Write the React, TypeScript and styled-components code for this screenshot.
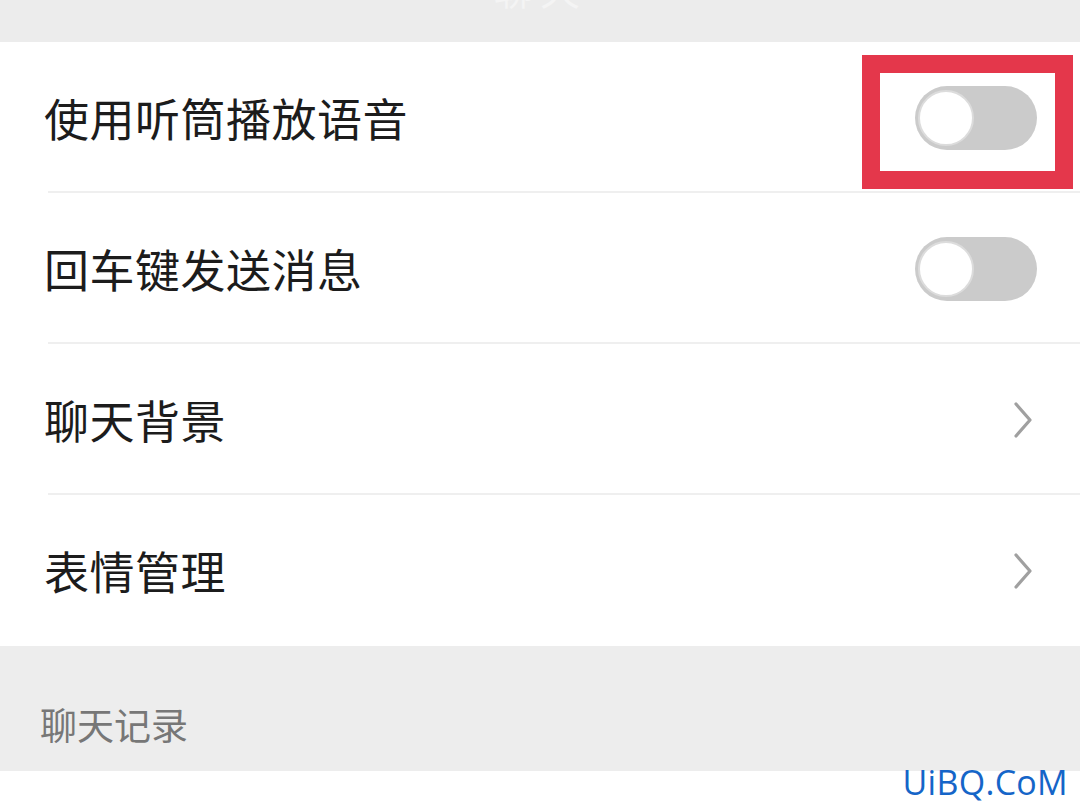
import styled, { createGlobalStyle } from 'styled-components'

const GlobalStyle = createGlobalStyle`
  html, body {
    margin: 0;
    padding: 0;
    background: #ffffff;
  }
  body {
    font-family: 'Noto Sans CJK SC', 'Noto Sans', sans-serif;
  }
`

type Row = {
  label: string
  kind: 'toggle' | 'link'
  marked?: boolean
}

const rows: Row[] = [
  { label: '使用听筒播放语音', kind: 'toggle', marked: true },
  { label: '回车键发送消息', kind: 'toggle' },
  { label: '聊天背景', kind: 'link' },
  { label: '表情管理', kind: 'link' },
]

const Switch = () => (
  <StyledSwitch>
    <StyledKnob />
  </StyledSwitch>
)

const Chevron = () => (
  <StyledChevron width="20" height="38" viewBox="0 0 20 38">
    <polyline
      points="3,3 17,19 3,35"
      fill="none"
      stroke="#a0a0a0"
      strokeWidth="3.2"
      strokeLinecap="round"
      strokeLinejoin="round"
    />
  </StyledChevron>
)

const App = () => {
  return (
    <>
      <GlobalStyle />
      <StyledPage>
        <StyledTopBar>
          <StyledTopTitle>聊天</StyledTopTitle>
        </StyledTopBar>
        <StyledGroup>
          {rows.map((row, i) => (
            <StyledRow key={row.label} last={i === rows.length - 1}>
              <StyledLabel>{row.label}</StyledLabel>
              {row.kind === 'toggle' ? <Switch /> : <Chevron />}
              {row.marked && <StyledMark />}
            </StyledRow>
          ))}
        </StyledGroup>
        <StyledSection>
          <StyledSectionTitle>聊天记录</StyledSectionTitle>
        </StyledSection>
        <StyledBottom />
        <StyledWatermark>UiBQ.CoM</StyledWatermark>
      </StyledPage>
    </>
  )
}

export default App

const StyledPage = styled.div`
  position: relative;
  width: 1080px;
  height: 810px;
  overflow: hidden;
  background: #ffffff;
  display: flex;
  flex-direction: column;
`

const StyledTopBar = styled.div`
  height: 42px;
  background: #ececec;
  display: flex;
  justify-content: center;
  overflow: hidden;
`

const StyledTopTitle = styled.div`
  margin-top: -36px;
  font-size: 40px;
  line-height: 1.2;
  color: #f4f4f4;
  letter-spacing: 6px;
`

const StyledGroup = styled.div`
  background: #ffffff;
  display: flex;
  flex-direction: column;
`

const StyledRow = styled.div<{ last?: boolean }>`
  position: relative;
  height: 151px;
  box-sizing: border-box;
  display: flex;
  align-items: center;
  justify-content: space-between;
  padding: 0 43px 0 44px;

  &::after {
    content: '';
    display: ${(p) => (p.last ? 'none' : 'block')};
    position: absolute;
    left: 48px;
    right: 0;
    bottom: 0;
    height: 2px;
    background: #efefef;
  }
`

const StyledLabel = styled.span`
  font-size: 45px;
  color: #1c1c1c;
  letter-spacing: 0.5px;
`

const StyledSwitch = styled.div`
  box-sizing: border-box;
  width: 122px;
  height: 64px;
  border-radius: 32px;
  background: #cbcbcb;
  padding: 3px;
  display: flex;
  align-items: center;
`

const StyledKnob = styled.div`
  width: 56px;
  height: 56px;
  border-radius: 50%;
  background: #ffffff;
  box-sizing: border-box;
  border: 2px solid #dcdcdc;
`

const StyledChevron = styled.svg`
  display: block;
  margin-right: 4px;
`

const StyledMark = styled.div`
  position: absolute;
  left: 862px;
  top: 13px;
  width: 211px;
  height: 134px;
  box-sizing: border-box;
  border: 18px solid #e4374b;
`

const StyledSection = styled.div`
  height: 125px;
  background: #ededed;
  display: flex;
  align-items: flex-end;
  padding: 0 0 20px 40px;
  box-sizing: border-box;
`

const StyledSectionTitle = styled.span`
  font-size: 37px;
  color: #777777;
`

const StyledBottom = styled.div`
  flex: 1;
  background: #ffffff;
`

const StyledWatermark = styled.div`
  position: absolute;
  right: 12px;
  bottom: 5px;
  font-family: 'Open Sans', 'DejaVu Sans', sans-serif;
  font-size: 34px;
  color: #1565c8;
  letter-spacing: 0.3px;
`
